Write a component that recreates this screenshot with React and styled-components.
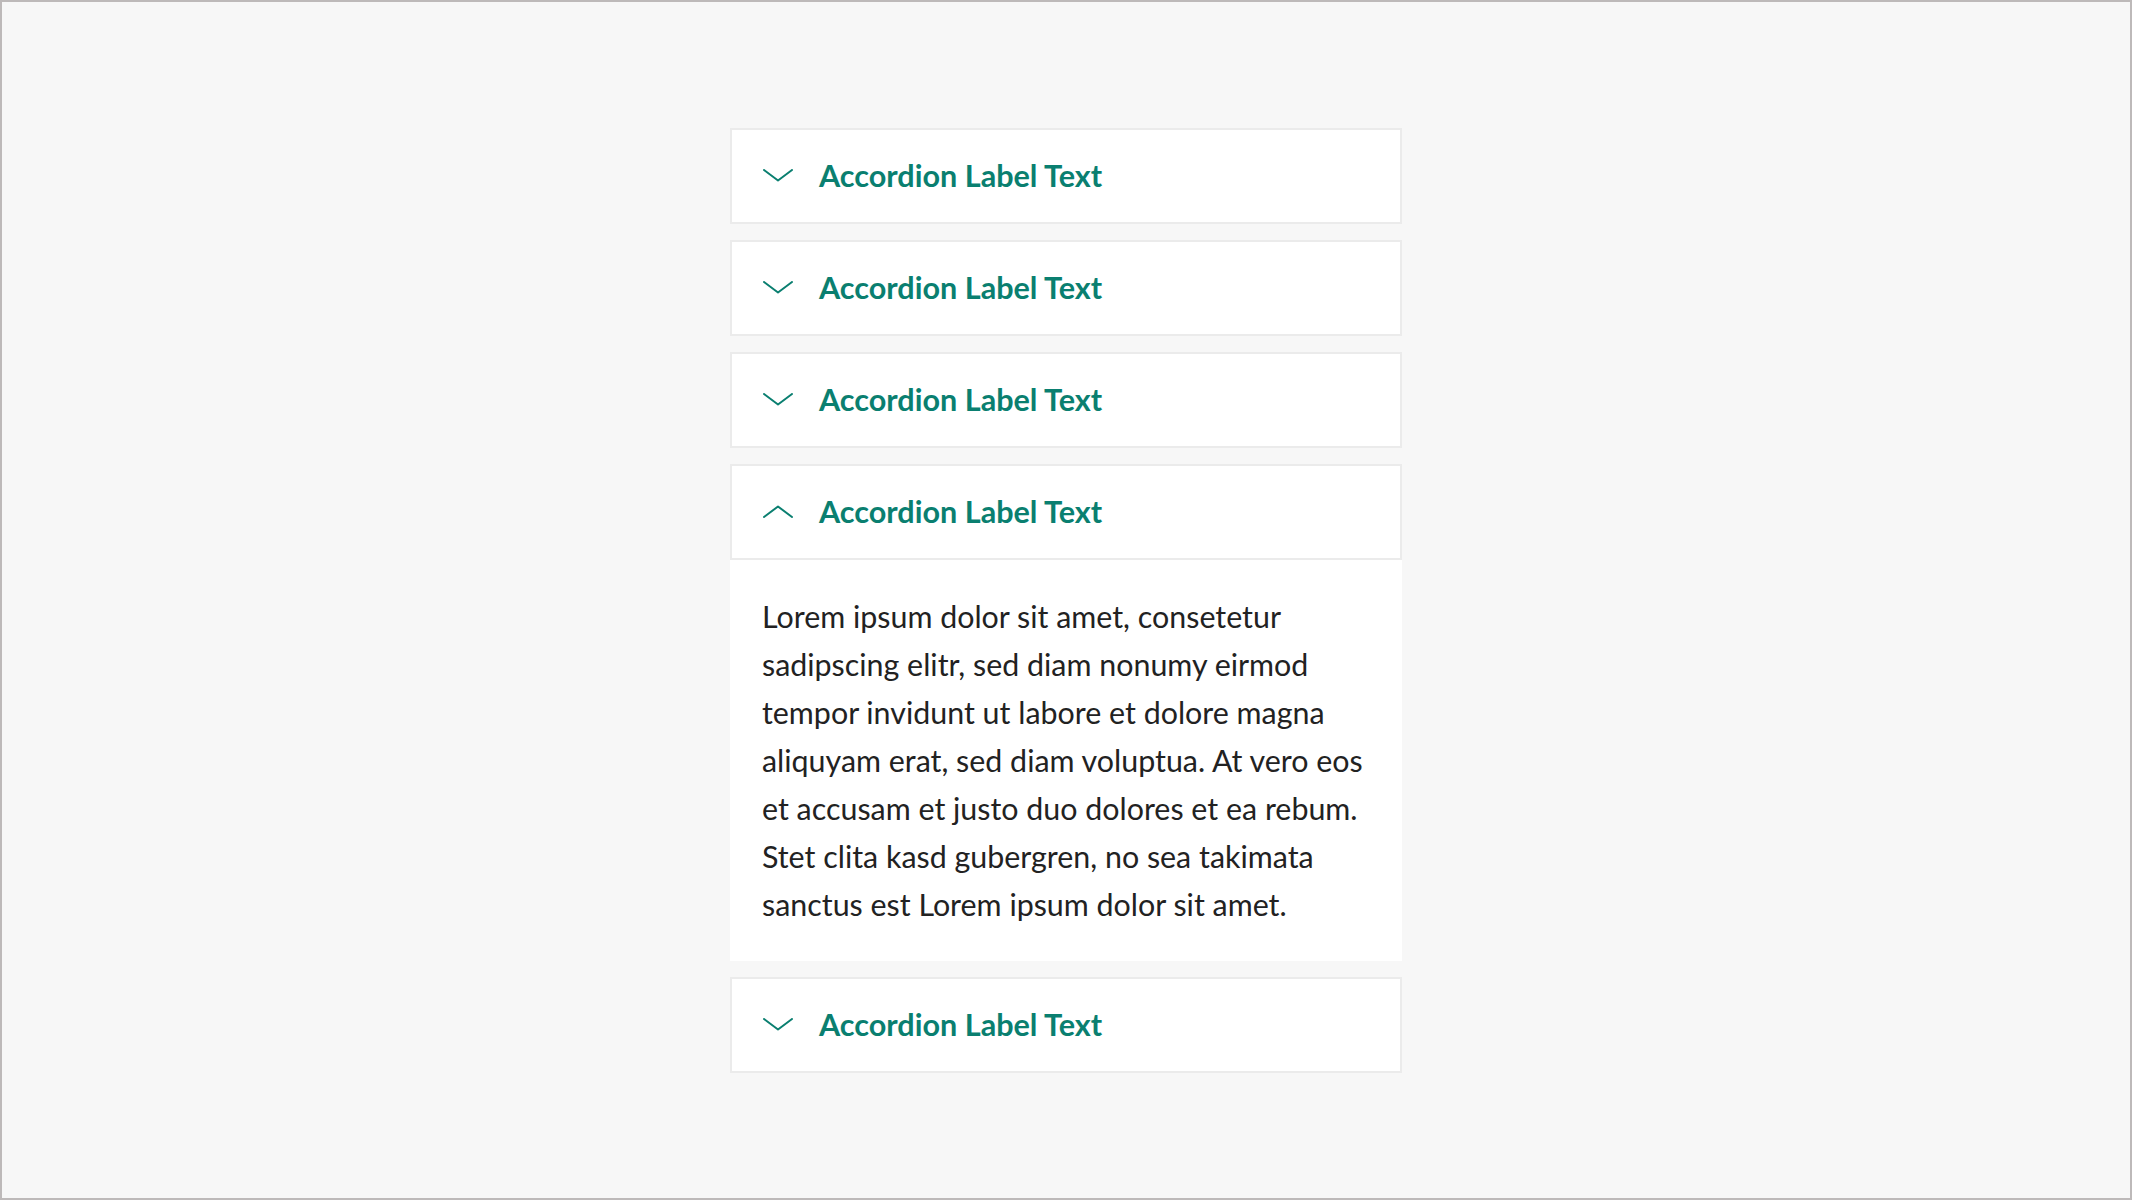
import React from "react";
import styled, { createGlobalStyle } from "styled-components";

const Global = createGlobalStyle`
  html, body { margin: 0; height: 100%; }
  body {
    font-family: Lato, "Noto Sans", sans-serif;
    background: #f7f7f7;
  }
  * { box-sizing: border-box; }
`;

const Page = styled.main`
  height: 100vh;
  border: 2px solid #bdb9b9;
  background: #f7f7f7;
  display: flex;
  align-items: center;
  justify-content: center;
`;

const List = styled.div`
  width: 672px;
  display: flex;
  flex-direction: column;
  gap: 16px;
`;

const Item = styled.section`
  display: flex;
  flex-direction: column;
`;

const Header = styled.button`
  height: 96px;
  width: 100%;
  display: flex;
  align-items: center;
  gap: 26px;
  padding: 0 0 0 31px;
  background: #fff;
  border: 2px solid #ebebeb;
  cursor: pointer;
  font-family: inherit;
  text-align: left;
`;

const Label = styled.span`
  font-size: 30.6px;
  font-weight: 700;
  color: #0a7f70;
  line-height: 1;
  padding-top: 2px;
`;

const Panel = styled.div`
  background: #fff;
  padding: 32px 22px 33px 32px;
  font-size: 30.4px;
  line-height: 48px;
  color: #222;
`;

const Chevron = ({ open }) => (
  <svg width="30" height="13" viewBox="0 0 30 13" fill="none">
    <polyline
      points={open ? "1,12 15,1.5 29,12" : "1,1 15,11.5 29,1"}
      stroke="#0a7f70"
      strokeWidth="2"
      strokeLinecap="round"
      strokeLinejoin="round"
    />
  </svg>
);

const items = [
  { id: 1, open: false },
  { id: 2, open: false },
  { id: 3, open: false },
  {
    id: 4,
    open: true,
    body:
      "Lorem ipsum dolor sit amet, consetetur sadipscing elitr, sed diam nonumy eirmod tempor invidunt ut labore et dolore magna aliquyam erat, sed diam voluptua. At vero eos et accusam et justo duo dolores et ea rebum. Stet clita kasd gubergren, no sea takimata sanctus est Lorem ipsum dolor sit amet.",
  },
  { id: 5, open: false },
];

export default function App() {
  return (
    <Page>
      <Global />
      <List>
        {items.map((it) => (
          <Item key={it.id}>
            <Header aria-expanded={it.open}>
              <Chevron open={it.open} />
              <Label>Accordion Label Text</Label>
            </Header>
            {it.open && <Panel>{it.body}</Panel>}
          </Item>
        ))}
      </List>
    </Page>
  );
}
